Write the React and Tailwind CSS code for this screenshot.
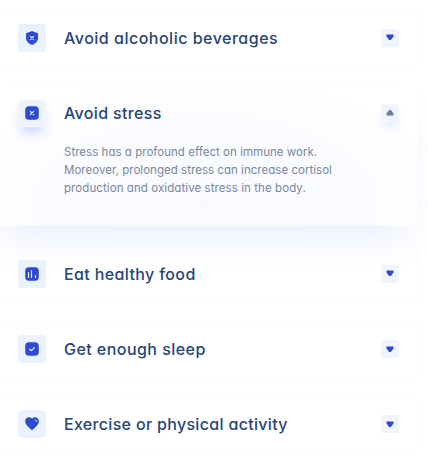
import React from "react";

function Glyph({ type }) {
  if (type === "shield")
    return (
      <svg width="14" height="16" viewBox="0 0 14 16" fill="none">
        <path d="M7 1C8.2 1.8 10.4 2.4 12 2.7Q13 3 13 4V8C13 11.3 10.6 13.7 7 15C3.4 13.7 1 11.3 1 8V4Q1 3 2 2.7C3.6 2.4 5.8 1.8 7 1Z" fill="#2c4bd0" />
        <path d="M5.5 6.5L8.5 9.5M8.5 6.5L5.5 9.5" stroke="#e4eaff" strokeWidth="1.1" strokeLinecap="round" />
      </svg>
    );
  if (type === "heart")
    return (
      <svg width="16" height="16" viewBox="0 0 16 16" fill="none">
        <path d="M8 2.6C9.7 1 12.3 .9 13.8 2.4C15.4 4.1 15.2 6.8 13.6 8.7C12.2 10.5 9.8 12.7 8.6 13.7Q8 14.2 7.4 13.7C6.2 12.7 3.8 10.5 2.4 8.7C.8 6.8 .6 4.1 2.2 2.4C3.7 .9 6.3 1 8 2.6Z" fill="#2c4bd0" />
        <path d="M11.2 4C12.2 4 12.7 4.6 12.7 5.6" stroke="#dfe7ff" strokeWidth="1" strokeLinecap="round" />
      </svg>
    );
  return (
    <svg width="14" height="14" viewBox="0 0 14 14" fill="none">
      <rect x="0.2" y="0.2" width="13.6" height="13.6" rx="3.8" fill="#2c4bd0" />
      {type === "cross" && <path d="M5.3 5.3L8.7 8.7M8.7 5.3L5.3 8.7" stroke="#f0f4ff" strokeWidth="1.2" strokeLinecap="round" />}
      {type === "chart" && <path d="M3.5 5.6V10.5M6.5 3.5V10.5M10.5 8.5V10.5" stroke="#dde5ff" strokeWidth="1.2" strokeLinecap="round" />}
      {type === "check" && <path d="M4.8 7.2L6.4 8.7L9.4 5.7" stroke="#e6ecff" strokeWidth="1.2" strokeLinecap="round" strokeLinejoin="round" />}
    </svg>
  );
}

function Toggle({ open }) {
  return (
    <span
      className={
        open
          ? "flex size-[18px] items-center justify-center rounded-[2px] border border-[#f6f8ff] bg-[#eff3ff] shadow-[0_7px_9px_-2px_rgba(90,110,255,0.17)]"
          : "flex size-[18px] items-center justify-center rounded-[2px] bg-[#eff4ff]"
      }
    >
      <svg className={open ? "mb-px shrink-0 rotate-180" : "shrink-0"} width="8" height="7" viewBox="0 0 8 7">
        <path d="M1.6 .6H6.4C7.6 .6 8 1.9 7.3 2.8L5.3 5.5Q4 7.1 2.7 5.5L.7 2.8C0 1.9 .4 .6 1.6 .6Z" fill={open ? "#6b7b9c" : "#2c4bd0"} />
      </svg>
    </span>
  );
}

function Header({ icon, title, spacing, open }) {
  return (
    <div className="flex h-7 items-center">
      <span
        className={
          open
            ? "flex size-7 items-center justify-center rounded-[4px] border border-[#f8f9ff] bg-[#edf2ff] shadow-[0_8px_11px_-2px_rgba(90,110,255,0.26)]"
            : "flex size-7 items-center justify-center rounded-[4px] bg-[#ebf2ff]"
        }
      >
        <Glyph type={icon} />
      </span>
      <h2 className={`ml-[18px] flex-1 whitespace-nowrap text-[16px] leading-7 font-medium text-[#264579] ${spacing}`}>{title}</h2>
      <Toggle open={open} />
    </div>
  );
}

const card = "-ml-2 h-[56px] shrink-0 rounded-[5px] border border-[#6482eb]/[0.045] pt-[13px] pr-[18px] pl-[25px]";

export default function App() {
  return (
    <main className="flex h-[459px] w-[428px] flex-col gap-[19.4px] overflow-hidden bg-white pt-[9.7px] pr-[10px] font-['Inter','Lato',sans-serif] [font-feature-settings:'cv11']">
      <section className={card}>
        <Header icon="shield" title="Avoid alcoholic beverages" spacing="tracking-[0.5px]" />
      </section>
      <section className="-ml-2 h-[141.2px] shrink-0 rounded-[4px] bg-[radial-gradient(ellipse_60%_95%_at_50%_85%,#f8faff_0%,#fafbff_50%,#ffffff_100%)] pt-[14.3px] pr-[19px] pl-[26px] shadow-[0_20px_34px_-12px_rgba(130,165,235,0.22)]">
        <Header icon="cross" title="Avoid stress" spacing="tracking-[0.35px]" open />
        <div className="mt-[16px] ml-[46px] text-[11.5px] leading-[18px] whitespace-nowrap text-[#78879f]">
          <p className="tracking-[0.03px]">Stress has a profound effect on immune work.</p>
          <p className="tracking-[0.03px]">Moreover, prolonged stress can increase cortisol</p>
          <p className="tracking-[0.08px]">production and oxidative stress in the body.</p>
        </div>
      </section>
      <section className={card}>
        <Header icon="chart" title="Eat healthy food" spacing="tracking-[0.38px]" />
      </section>
      <section className={card}>
        <Header icon="check" title="Get enough sleep" spacing="tracking-[0.45px]" />
      </section>
      <section className={card}>
        <Header icon="heart" title="Exercise or physical activity" spacing="tracking-[0.32px]" />
      </section>
    </main>
  );
}
